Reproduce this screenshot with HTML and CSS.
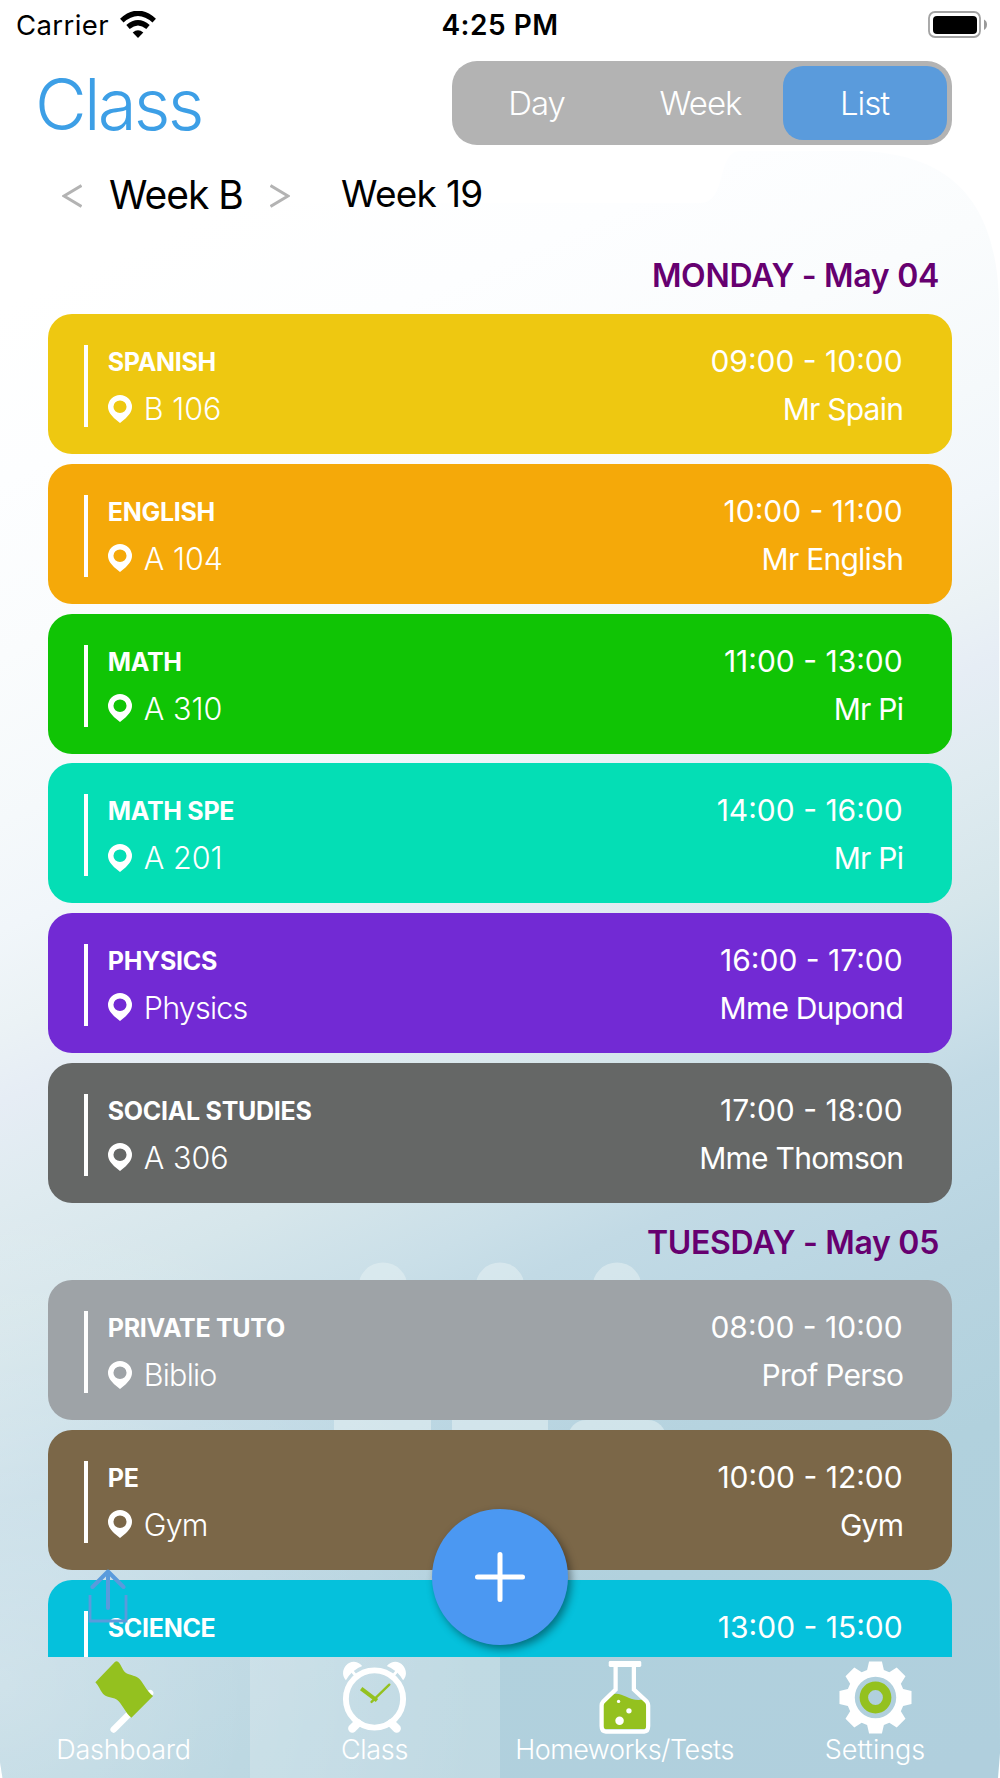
FILE: index.html
```html
<!DOCTYPE html>
<html lang="en">
<head>
<meta charset="utf-8">
<title>Class</title>
<link rel="stylesheet" href="styles.css">
</head>
<body>
<svg class="backdrop" viewBox="0 0 1000 1778" aria-hidden="true">
  <defs>
    <linearGradient id="sky" gradientUnits="userSpaceOnUse" x1="0" y1="0" x2="814" y2="1828">
      <stop offset=".14" stop-color="#fff"/>
      <stop offset=".22" stop-color="#fdfeff"/>
      <stop offset=".3" stop-color="#fafcfd"/>
      <stop offset=".375" stop-color="#f5f9fb"/>
      <stop offset=".425" stop-color="#f1f6fa"/>
      <stop offset=".47" stop-color="#ebf2f5"/>
      <stop offset=".503" stop-color="#e6edf5"/>
      <stop offset=".55" stop-color="#dfebf0"/>
      <stop offset=".608" stop-color="#d6e6eb"/>
      <stop offset=".66" stop-color="#cadfe8"/>
      <stop offset=".69" stop-color="#c2dae5"/>
      <stop offset=".735" stop-color="#bcd7e3"/>
      <stop offset=".77" stop-color="#b8d4e0"/>
      <stop offset=".85" stop-color="#b1d1dd"/>
      <stop offset="1" stop-color="#b0cfdd"/>
    </linearGradient>
    <radialGradient id="glow" gradientUnits="userSpaceOnUse" cx="0" cy="1680" r="480">
      <stop offset="0" stop-color="#fff" stop-opacity=".33"/>
      <stop offset="1" stop-color="#fff" stop-opacity="0"/>
    </radialGradient>
  </defs>
  <path fill="url(#sky)" d="M0 152H255C280 152 272 203 300 203H700C728 203 716 151 740 151H860C950 154 996 200 999 300L1000 1753L998 1778H2.500L0 1762Z"/>
  <path fill="url(#glow)" d="M0 1200H500V1778H2.500L0 1762Z"/>
  <g fill="#e5f1f3" fill-opacity=".55">
    <circle cx="383" cy="1287" r="24.5"/><circle cx="500" cy="1287" r="24.5"/><circle cx="617" cy="1287" r="24.5"/>
    <rect x="334" y="1400" width="97" height="60"/><rect x="452" y="1400" width="96" height="60"/><rect x="568" y="1420" width="98" height="60" rx="18"/>
  </g>
</svg>

<div class="screen">
  <header class="status">
    <div class="carrier">
      <span class="carrier-name">Carrier</span>
      <svg class="wifi" viewBox="0 0 36 27"><g fill="none" stroke="#000" stroke-width="5.2"><path d="M1.8 9.6Q18-5 34.2 9.6"/><path d="M8 16Q18 7.500 28 16"/></g><path d="M12.700 21.500Q18 17.200 23.300 21.500L18 27Z"/></svg>
    </div>
    <span class="clock">4:25 PM</span>
    <svg class="battery" viewBox="0 0 60 28"><rect x="1" y="1" width="51" height="25" rx="6" fill="none" stroke="#a2a2a2" stroke-width="1.800"/><rect x="5" y="5" width="44" height="18" rx="4"/><path fill="#999" d="M56 8.500Q59 10 59 13.500T56 19Z"/></svg>
  </header>

  <div class="heading">
    <h1 class="title">Class</h1>
    <nav class="segments">
      <span class="segment">Day</span>
      <span class="segment">Week</span>
      <span class="segment segment-on">List</span>
    </nav>
  </div>

  <div class="weeks">
    <svg class="chevron" viewBox="0 0 20 24"><path d="M19.500 1.500L2 12L19.500 22.500"/></svg>
    <span class="week-type">Week B</span>
    <svg class="chevron" viewBox="0 0 20 24"><path d="M.5 1.500L18 12L.5 22.500"/></svg>
    <span class="week-number">Week 19</span>
  </div>

  <svg class="symbols" aria-hidden="true">
    <symbol id="pin" viewBox="0 0 24 28"><path fill="#fff" fill-rule="evenodd" d="M12 0A12 12 0 0 1 24 12C24 17 20 21 17.500 23.400L12 28L6.500 23.400C4 21 0 17 0 12A12 12 0 0 1 12 0ZM12 5.500A6.500 6.200 0 1 0 12 18A6.500 6.200 0 1 0 12 5.500Z"/></symbol>
  </svg>

  <main class="schedule">
    <h2 class="day">MONDAY - May 04</h2>
    <div class="cards">
      <article class="card spanish"><div class="left"><h3 class="subject">SPANISH</h3><p class="place"><svg class="pin"><use href="#pin"/></svg>B 106</p></div><div class="right"><p class="time">09:00 - 10:00</p><p class="teacher">Mr Spain</p></div></article>
      <article class="card english"><div class="left"><h3 class="subject">ENGLISH</h3><p class="place"><svg class="pin"><use href="#pin"/></svg>A 104</p></div><div class="right"><p class="time">10:00 - 11:00</p><p class="teacher">Mr English</p></div></article>
      <article class="card math"><div class="left"><h3 class="subject">MATH</h3><p class="place"><svg class="pin"><use href="#pin"/></svg>A 310</p></div><div class="right"><p class="time">11:00 - 13:00</p><p class="teacher">Mr Pi</p></div></article>
      <article class="card math-spe"><div class="left"><h3 class="subject">MATH SPE</h3><p class="place"><svg class="pin"><use href="#pin"/></svg>A 201</p></div><div class="right"><p class="time">14:00 - 16:00</p><p class="teacher">Mr Pi</p></div></article>
      <article class="card physics"><div class="left"><h3 class="subject">PHYSICS</h3><p class="place place-named"><svg class="pin"><use href="#pin"/></svg>Physics</p></div><div class="right"><p class="time">16:00 - 17:00</p><p class="teacher">Mme Dupond</p></div></article>
      <article class="card social"><div class="left"><h3 class="subject">SOCIAL STUDIES</h3><p class="place"><svg class="pin"><use href="#pin"/></svg>A 306</p></div><div class="right"><p class="time">17:00 - 18:00</p><p class="teacher">Mme Thomson</p></div></article>
    </div>
    <h2 class="day day-next">TUESDAY - May 05</h2>
    <div class="cards">
      <article class="card tuto"><div class="left"><h3 class="subject">PRIVATE TUTO</h3><p class="place place-named"><svg class="pin"><use href="#pin"/></svg>Biblio</p></div><div class="right"><p class="time">08:00 - 10:00</p><p class="teacher">Prof Perso</p></div></article>
      <article class="card pe"><div class="left"><h3 class="subject">PE</h3><p class="place place-named"><svg class="pin"><use href="#pin"/></svg>Gym</p></div><div class="right"><p class="time">10:00 - 12:00</p><p class="teacher">Gym</p></div></article>
      <article class="card science"><div class="left"><h3 class="subject">SCIENCE</h3></div><div class="right"><p class="time">13:00 - 15:00</p></div></article>
    </div>
  </main>

  <nav class="tabs">
    <a class="tab tab-dash">
      <svg class="tab-icon" viewBox="0 0 74 74"><path stroke="#fff" stroke-width="6.500" stroke-linecap="round" d="M27 69.500L64 32.500"/><path fill="#94c11f" d="M28.500 .8Q30 -.5 31.500 .8C35 4 36 10 40 12.500C44 14.500 50 15 53.500 18.500C58 24 61 31 67 35.500L45 57.500C39 53 35 42 30 39C25 36.500 19 37 16 33C13 29 12 25 8.500 21.500Z"/></svg>
      <span class="tab-name">Dashboard</span>
    </a>
    <a class="tab tab-class tab-on">
      <svg class="tab-icon" viewBox="0 0 74 74"><circle cx="37" cy="38.500" r="29" fill="none" stroke="#fff" stroke-width="6"/><path fill="#fff" d="M8 19.500C-1 10 13-7 24.500 5Q14 9 8 19.500ZM66 19.500C75 10 61-7 49.500 5Q60 9 66 19.500Z"/><path fill="none" stroke="#fff" stroke-width="3" d="M14 10L19 16M60 10L55 16"/><path fill="none" stroke="#fff" stroke-width="8.500" stroke-linecap="round" d="M20 63L14.500 68.500M54 63L59.500 68.500"/><path fill="none" stroke="#94c11f" stroke-width="4" d="M23.500 28L39.500 40"/><path fill="none" stroke="#94c11f" stroke-width="2.400" stroke-linecap="round" d="M34 41.500L52 24"/></svg>
      <span class="tab-name">Class</span>
    </a>
    <a class="tab tab-home">
      <svg class="tab-icon" viewBox="0 0 74 74"><path fill="#94c11f" d="M15 42L24 34C35 30 41 42 56 39L60 42V66Q60 69 57 69H18Q15 69 15 66Z"/><path fill="none" stroke="#fff" stroke-width="4.300" d="M28 5V29L15.500 41Q13.800 43 13.800 45V66Q13.800 71.500 18 71.500H57Q61 71.500 61 66V45Q61 43 59.500 41L46.500 29V5"/><rect x="21" y="0" width="33" height="6" rx="1.500" fill="#fff"/><g fill="#fff"><circle cx="31" cy="41" r="1.700"/><circle cx="41.500" cy="50.500" r="2.700"/><circle cx="32" cy="60.500" r="4.300"/></g></svg>
      <span class="tab-name">Homeworks/Tests</span>
    </a>
    <a class="tab tab-set">
      <svg class="tab-icon" viewBox="0 0 74 74"><path fill="#fff" fill-rule="evenodd" d="M30.500 .5H43.500L45.500 9L51 11.300L58.500 6.600L67.400 15.500L62.700 23L65 28.500L73.500 30.500V43.500L65 45.500L62.700 51L67.400 58.500L58.500 67.400L51 62.700L45.500 65L43.500 73.500H30.500L28.500 65L23 62.700L15.500 67.400L6.600 58.500L11.300 51L9 45.500L.5 43.500V30.500L9 28.500L11.300 23L6.600 15.500L15.500 6.600L23 11.300L28.500 9ZM37 16A21 21 0 1 0 37 58A21 21 0 1 0 37 16Z"/><circle cx="37" cy="37" r="11.800" fill="none" stroke="#94c11f" stroke-width="8.600"/></svg>
      <span class="tab-name">Settings</span>
    </a>
  </nav>
</div>

<svg class="share" viewBox="0 0 40 54"><g fill="none" stroke="#5a9bdc"><path stroke-width="2.800" d="M2 26V52H38V26"/><path stroke-width="4" stroke-linecap="round" stroke-linejoin="round" d="M20 39V2.500M4.500 18L20 2.500L35.500 18"/></g></svg>
<button class="add" aria-label="Add"><svg class="plus" viewBox="0 0 50 50"><path fill="none" stroke="#fff" stroke-width="5" stroke-linecap="round" d="M25 2.500V47.500M2.500 25H47.500"/></svg></button>
</body>
</html>
```
FILE: styles.css
```css
* { box-sizing: border-box; }
html, body { margin: 0; height: 1778px; overflow: hidden; background: #fff; }
body { position: relative; width: 1000px; font-family: Inter, "Liberation Sans", sans-serif; color: #000; }
h1, h2, h3, p { margin: 0; font-weight: inherit; }
span, p, h1, h2, h3 { white-space: nowrap; }
.backdrop { position: absolute; left: 0; top: 0; width: 1000px; height: 1778px; }
.screen { position: relative; display: flex; flex-direction: column; height: 1778px; }
.symbols { position: absolute; width: 0; height: 0; }

.status { display: grid; grid-template-columns: 1fr auto 1fr; align-items: center; height: 50px; padding: 0 12px 0 16px; font-size: 27.500px; }
.carrier { display: flex; align-items: center; gap: 11px; letter-spacing: .4px; }
.wifi { width: 36px; height: 27px; margin-top: -2px; }
.clock { margin-right: 4px; font-size: 28px; font-weight: 600; letter-spacing: .5px; }
.battery { justify-self: end; width: 60px; height: 28px; }

.heading { display: flex; justify-content: space-between; align-items: flex-start; height: 103px; padding: 10.500px 48px 0 35px; }
.title { color: #3d9fe6; font-size: 71px; font-weight: 300; line-height: 87px; letter-spacing: -2.800px; }
.segments { display: grid; grid-template-columns: repeat(3, 164px); justify-content: end; width: 500.500px; height: 84.500px; padding: 5px; border-radius: 25px; background: #b3b3b3; }
.segment { display: flex; align-items: center; justify-content: center; padding-right: 1px; color: #fff; font-size: 33px; font-weight: 300; letter-spacing: -1px; }
.segment-on { border-radius: 20px; background: #5a9bdc; }

.weeks { display: flex; align-items: center; height: 84.200px; padding-left: 62px; }
.chevron { width: 20px; height: 24px; margin-top: 2px; fill: none; stroke: #b3b3b3; stroke-width: 3; }
.week-type { width: 136px; margin: -2px 25px 0 27px; font-size: 39px; letter-spacing: -1px; }
.week-number { margin: -4px 0 0 51px; font-size: 37px; letter-spacing: -.7px; }

.schedule { height: 1419.800px; overflow: hidden; }
.day { height: 77px; padding-right: 61px; color: #660070; font-size: 32px; font-weight: 600; line-height: 78px; letter-spacing: -.3px; text-align: right; }
.day-next { height: 77.500px; line-height: 79px; }
.cards { display: flex; flex-direction: column; gap: 9.700px; padding: 0 48.300px; }
.card { display: flex; justify-content: space-between; height: 140px; padding: 31px 49px 27px 36px; border-radius: 24px; color: #fff; }
.left { height: 82px; padding-left: 19.500px; border-left: 4.500px solid #fff; }
.subject { font-size: 25px; font-weight: 700; line-height: 34px; letter-spacing: -.3px; }
.place { display: flex; align-items: center; gap: 12px; height: 47px; margin-top: 6px; font-size: 30.500px; font-weight: 330; }
.place-named { letter-spacing: -.8px; }
.pin { width: 24px; height: 28px; }
.right { text-align: right; font-size: 30px; font-weight: 400; }
.time { line-height: 33px; }
.teacher { margin: 7px -.5px 0 0; line-height: 48px; letter-spacing: -.75px; }
.spanish { background: #eec811; }
.english { background: #f5a909; }
.math { background: #10c405; }
.math-spe { background: #04deb5; }
.physics { background: #722ad4; }
.social { background: #656766; }
.tuto { background: #9ea3a7; }
.pe { background: #7b6748; }
.science { background: #05c1dc; }

.tabs { display: grid; grid-template-columns: repeat(4, 250px); height: 121px; }
.tab { display: flex; flex-direction: column; align-items: center; padding-top: 4.500px; color: #fff; }
.tab-on { background: rgba(255,255,255,.2); }
.tab-icon { width: 73px; height: 73px; }
.tab-dash { padding-right: 3px; }
.tab-class, .tab-home { padding-right: 1px; }
.tab-name { font-size: 27px; font-weight: 300; line-height: 32px; letter-spacing: -.3px; }
.tab-home .tab-name { letter-spacing: -.5px; }
.tab-set .tab-name { letter-spacing: 0; }

.share { position: absolute; left: 88.300px; top: 1569px; width: 40px; height: 54px; }
.add { position: absolute; left: 432px; top: 1509px; display: flex; align-items: center; justify-content: center; width: 136px; height: 136px; padding: 0; border: 0; border-radius: 50%; background: #4b98f2; box-shadow: 3px 4px 8px rgba(0,0,0,.42); }
.plus { width: 50px; height: 50px; }
```
